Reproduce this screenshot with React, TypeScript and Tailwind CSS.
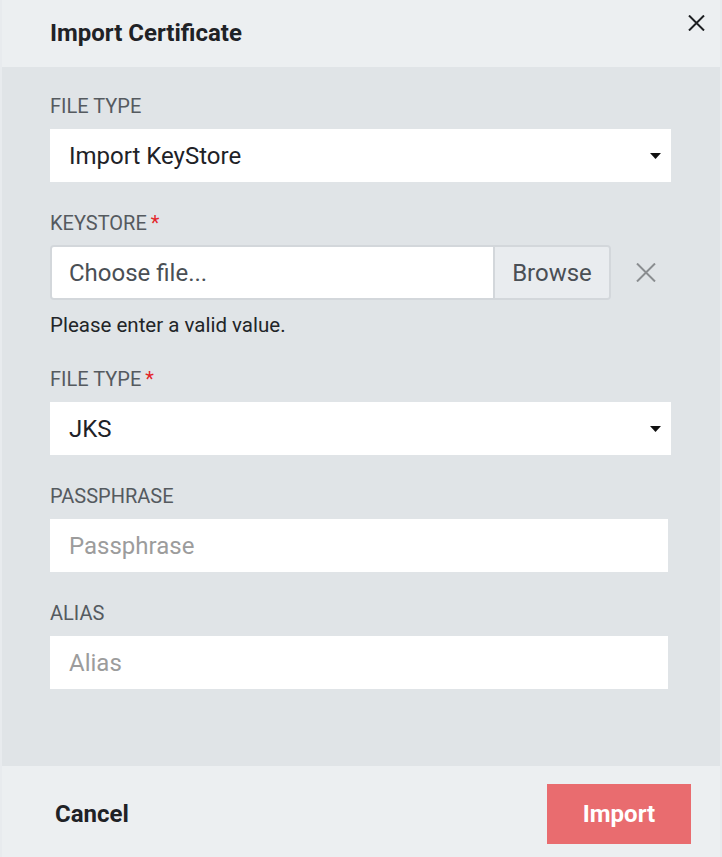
const font = { fontFamily: "Roboto, 'Liberation Sans', sans-serif" };

const Caret = () => (
  <svg width="11" height="6" viewBox="0 0 11 6" className="shrink-0">
    <path d="M0 0h11L5.5 6z" fill="#111" />
  </svg>
);

const Label = ({ text, required }: { text: string; required?: boolean }) => (
  <div className="text-[20px] leading-[24px] text-[#555a5f] mb-[11px]">
    {text}
    {required && <span className="text-[#e3262b] ml-[4px]">*</span>}
  </div>
);

const SelectBox = ({ value }: { value: string }) => (
  <div className="w-[621px] h-[53px] bg-white flex items-center justify-between pl-[19px] pr-[10px]">
    <span className="text-[24px] text-[#1e2227]">{value}</span>
    <Caret />
  </div>
);

const TextBox = ({ placeholder }: { placeholder: string }) => (
  <div className="w-[618px] h-[53px] bg-white flex items-center pl-[19px]">
    <span className="text-[24px] text-[#9c9c9c]">{placeholder}</span>
  </div>
);

export default function App() {
  return (
    <div className="w-[722px] h-[857px] overflow-hidden relative border-x-2 border-[#e8ebee]" style={font}>
      {/* header */}
      <div className="h-[67px] bg-[#eceff1] flex items-center pl-[48px]">
        <h1 className="text-[24px] font-bold text-[#1f2226] pb-[2px]">Import Certificate</h1>
      </div>
      <button className="absolute left-[685px] top-[14px] w-[18px] h-[18px] flex items-center justify-center">
        <svg width="17" height="16" viewBox="0 0 17 16">
          <path d="M1 0.5L16 15.5M16 0.5L1 15.5" stroke="#1d1f22" strokeWidth="2" />
        </svg>
      </button>

      {/* body */}
      <div className="h-[699px] bg-[#e0e4e7] pt-[27px] pl-[48px]">
        <Label text="FILE TYPE" />
        <SelectBox value="Import KeyStore" />

        <div className="mt-[29px]">
          <div className="text-[20px] leading-[24px] text-[#555a5f] mb-[10px]">
            KEYSTORE<span className="text-[#e3262b] ml-[4px]">*</span>
          </div>
          <div className="flex items-center">
            <div className="w-[561px] h-[55px] flex border-2 border-[#d3d7db] rounded-[4px] overflow-hidden">
              <div className="flex-1 bg-white flex items-center pl-[17px]">
                <span className="text-[24px] text-[#4a4f55]">Choose file...</span>
              </div>
              <div className="w-[116px] bg-[#e9ecef] border-l-2 border-[#d3d7db] flex items-center justify-center">
                <span className="text-[24px] text-[#4a4f55]">Browse</span>
              </div>
            </div>
            <svg width="20" height="19" viewBox="0 0 20 19" className="ml-[25px]">
              <path d="M1 0.5L19 18.5M19 0.5L1 18.5" stroke="#8a8d90" strokeWidth="2" />
            </svg>
          </div>
          <div className="mt-[13px] text-[20.5px] leading-[24px] text-[#222528]">Please enter a valid value.</div>
        </div>

        <div className="mt-[30px]">
          <Label text="FILE TYPE" required />
          <SelectBox value="JKS" />
        </div>

        <div className="mt-[29px]">
          <Label text="PASSPHRASE" />
          <TextBox placeholder="Passphrase" />
        </div>

        <div className="mt-[29px]">
          <Label text="ALIAS" />
          <TextBox placeholder="Alias" />
        </div>
      </div>

      {/* footer */}
      <div className="h-[91px] bg-[#eceff1] flex items-start justify-between pt-[18px] pl-[53px] pr-[29px]">
        <div className="h-[60px] flex items-center">
          <span className="text-[24px] font-bold text-[#1f2226]">Cancel</span>
        </div>
        <button className="w-[144px] h-[60px] bg-[#e96c6f] text-white text-[24px] font-bold flex items-center justify-center">
          Import
        </button>
      </div>
    </div>
  );
}
